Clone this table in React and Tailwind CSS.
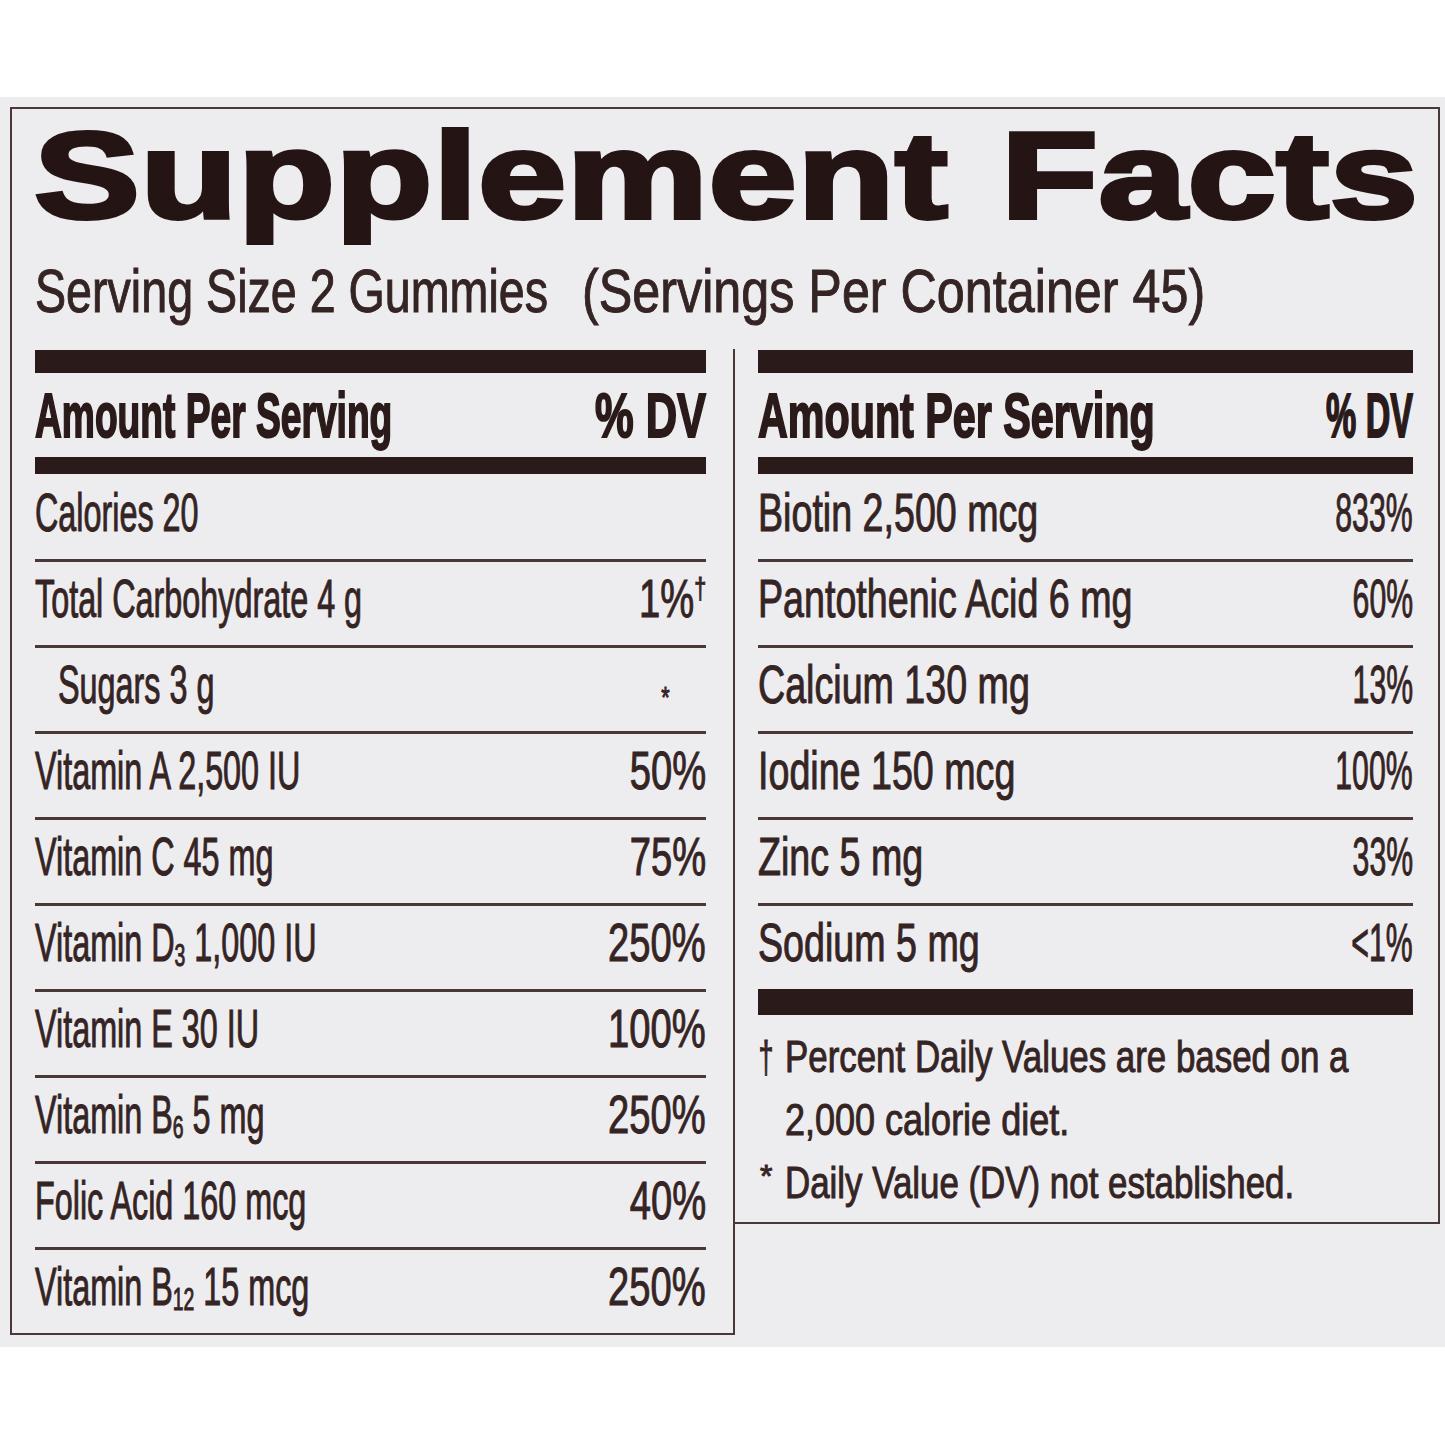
import React from "react";

function Sub({ children }) {
  return <span className="text-[0.6em] leading-[0px] relative top-[5px]">{children}</span>;
}

function Row({ first, indent, label, value, labelCls, valueCls }) {
  return (
    <div
      className={`flex items-start pb-[20px] ${
        first ? "pt-[12px]" : "pt-[10px] border-t-[3px] border-[#4a3838]"
      }`}
    >
      <div className={`flex-1 min-w-0 flex ${indent ? "pl-[23px]" : ""}`}>
        <span
          className={`shrink-0 block whitespace-nowrap origin-left text-[53px] leading-[53px] [-webkit-text-stroke:1px_#352424] ${labelCls}`}
        >
          {label}
        </span>
      </div>
      <div className="shrink-0 flex">
        <span
          className={`shrink-0 block whitespace-nowrap origin-right text-[53px] leading-[53px] [-webkit-text-stroke:1px_#352424] ${valueCls}`}
        >
          {value}
        </span>
      </div>
    </div>
  );
}

function Header({ amountCls, dvCls }) {
  return (
    <>
      <div className="h-[23px] bg-[#2a1a1a]" />
      <div className="flex items-start pt-[11px] pb-[10px] font-bold text-[#2a1a1a]">
        <div className="flex-1 min-w-0 flex">
          <span
            className={`shrink-0 block whitespace-nowrap origin-left text-[63px] leading-[63px] [-webkit-text-stroke:2px_#2a1a1a] ${amountCls}`}
          >
            Amount Per Serving
          </span>
        </div>
        <div className="shrink-0 flex">
          <span
            className={`shrink-0 block whitespace-nowrap origin-right text-[63px] leading-[63px] [-webkit-text-stroke:2px_#2a1a1a] ${dvCls}`}
          >
            % DV
          </span>
        </div>
      </div>
      <div className="h-[17px] bg-[#2a1a1a]" />
    </>
  );
}

const leftRows = [
  { label: "Calories 20", value: "" },
  {
    label: "Total Carbohydrate 4 g",
    value: (
      <>
        1%
        <span className="text-[30px] leading-[0px] relative top-[-18px]">†</span>
      </>
    ),
  },
  {
    label: "Sugars 3 g",
    value: <span className="text-[30px] leading-[0px] relative top-[4px] mr-[50px]">*</span>,
    indent: true,
  },
  { label: "Vitamin A 2,500 IU", value: "50%" },
  { label: "Vitamin C 45 mg", value: "75%" },
  {
    label: (
      <>
        Vitamin D<Sub>3</Sub> 1,000 IU
      </>
    ),
    value: "250%",
  },
  { label: "Vitamin E 30 IU", value: "100%" },
  {
    label: (
      <>
        Vitamin B<Sub>6</Sub> 5 mg
      </>
    ),
    value: "250%",
  },
  { label: "Folic Acid 160 mcg", value: "40%" },
  {
    label: (
      <>
        Vitamin B<Sub>12</Sub> 15 mcg
      </>
    ),
    value: "250%",
  },
];

const rightRows = [
  { label: "Biotin 2,500 mcg", value: "833%" },
  { label: "Pantothenic Acid 6 mg", value: "60%" },
  { label: "Calcium 130 mg", value: "13%" },
  { label: "Iodine 150 mcg", value: "100%" },
  { label: "Zinc 5 mg", value: "33%" },
  { label: "Sodium 5 mg", value: "<1%" },
];

export default function App() {
  return (
    <div className="w-[1445px] h-[1445px] bg-white font-['Liberation_Sans',Arial,sans-serif] text-[#352424] overflow-hidden">
      <div className="h-[97px] bg-white" />
      <div className="bg-[#ededef] pl-[10px] pr-[5px] pt-[10px] pb-[12px] overflow-hidden">
        {/* Top section */}
        <div className="border-t-2 border-l-2 border-r-2 border-[#4a3838] pb-[27px]">
          <div className="pl-[22px] pt-[5px] h-[128px]">
            <div className="w-max origin-left scale-x-[1.29] text-[123px] leading-[123px] font-bold tracking-[0.5px] [word-spacing:6px] whitespace-nowrap text-[#241414] [-webkit-text-stroke:4px_#241414]">
              Supplement Facts
            </div>
          </div>
          <div className="pl-[23px] mt-[23px] h-[62px] flex text-[62px] leading-[62px] whitespace-nowrap [-webkit-text-stroke:1px_#352424]">
            <div className="w-[547px] shrink-0 flex">
              <span className="shrink-0 block origin-left scale-x-[0.752]">Serving Size 2 Gummies</span>
            </div>
            <div className="flex-1 min-w-0 flex">
              <span className="shrink-0 block origin-left scale-x-[0.811]">(Servings Per Container 45)</span>
            </div>
          </div>
        </div>
        {/* Columns */}
        <div className="flex items-start">
          <div className="w-[725px] shrink-0 border-l-2 border-r-2 border-b-2 border-[#4a3838] pl-[23px] pr-[27px] pt-[1px]">
            <Header amountCls="scale-x-[0.59]" dvCls="scale-x-[0.69]" />
            {leftRows.map((r, i) => (
              <Row
                key={i}
                first={i === 0}
                indent={r.indent}
                label={r.label}
                value={r.value}
                labelCls="scale-x-[0.61]"
                valueCls="scale-x-[0.72]"
              />
            ))}
          </div>
          <div className="w-[705px] shrink-0 border-r-2 border-b-2 border-[#4a3838] pl-[23px] pr-[25px] pt-[1px]">
            <Header amountCls="scale-x-[0.655]" dvCls="scale-x-[0.54]" />
            {rightRows.map((r, i) => (
              <Row
                key={i}
                first={i === 0}
                label={r.label}
                value={r.value}
                labelCls="scale-x-[0.71]"
                valueCls="scale-x-[0.57]"
              />
            ))}
            <div className="h-[26px] bg-[#2a1a1a]" />
            <div className="pt-[10px] pb-[8px] text-[45px] leading-[63px] [-webkit-text-stroke:1px_#352424]">
              <div className="flex">
                <span className="w-[27px] shrink-0 pl-[1px] block origin-left scale-x-[0.6]">†</span>
                <span className="block whitespace-nowrap origin-left scale-x-[0.775]">
                  Percent Daily Values are based on a
                </span>
              </div>
              <div className="flex pl-[27px]">
                <span className="block whitespace-nowrap origin-left scale-x-[0.8]">
                  2,000 calorie diet.
                </span>
              </div>
              <div className="flex">
                <span className="w-[27px] shrink-0 pl-[2px] text-[32px] relative top-[-6px]">*</span>
                <span className="block whitespace-nowrap origin-left scale-x-[0.775]">
                  Daily Value (DV) not established.
                </span>
              </div>
            </div>
          </div>
        </div>
      </div>
    </div>
  );
}
